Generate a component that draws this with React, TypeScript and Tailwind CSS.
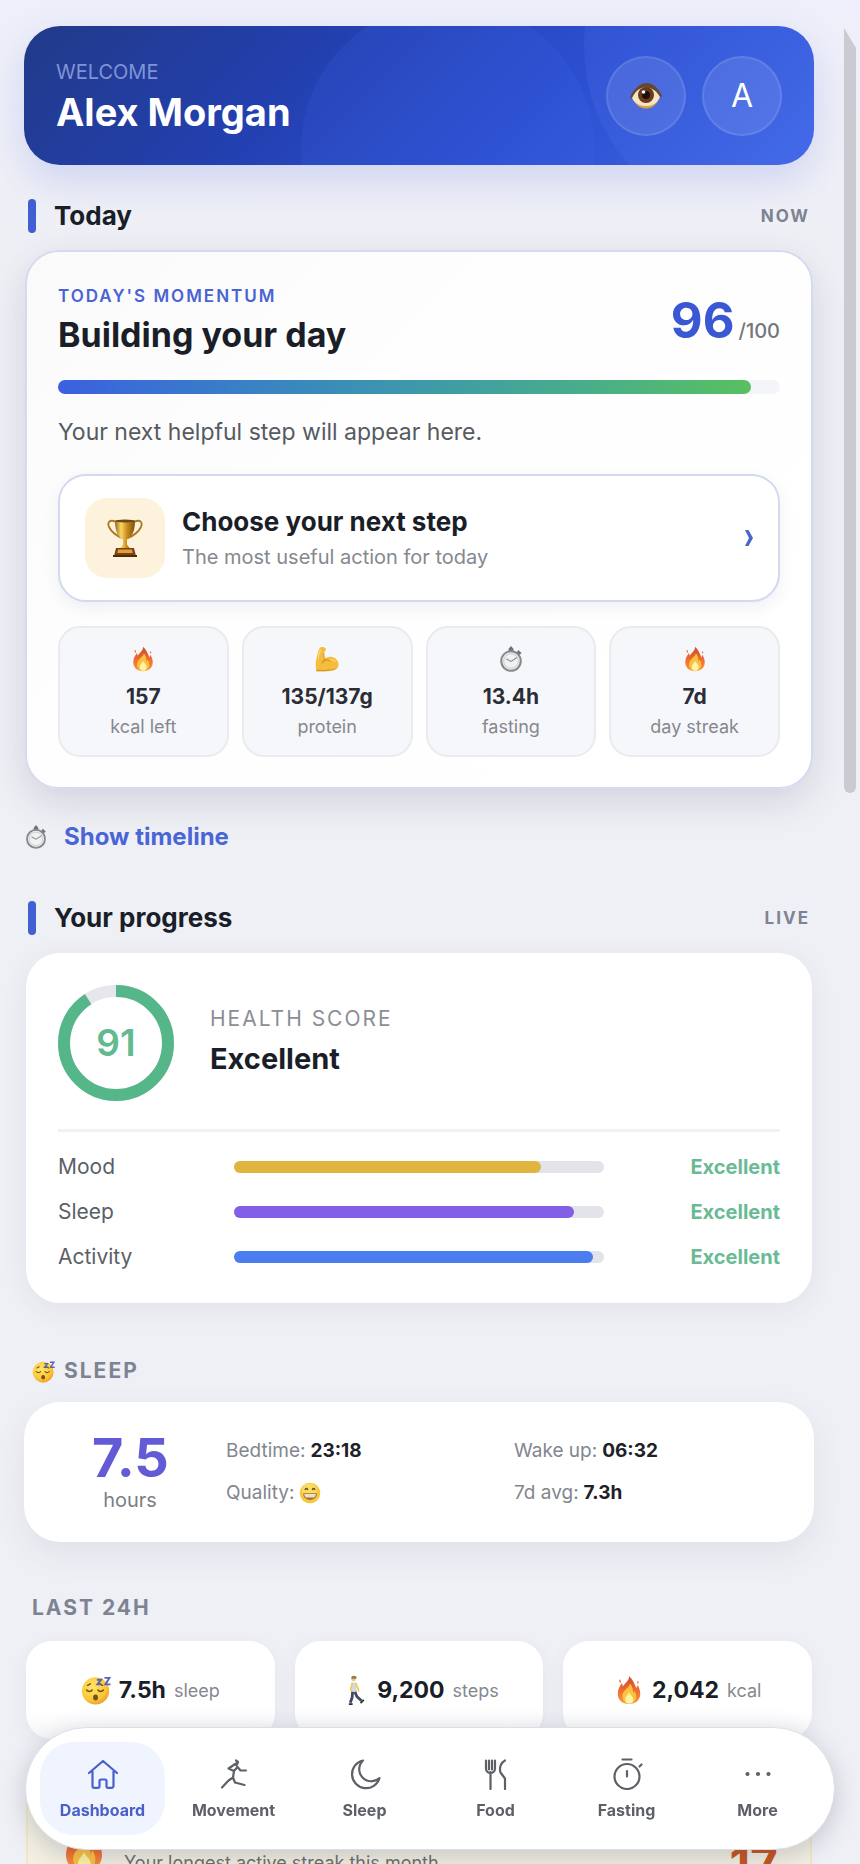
import {useId} from "react";
import type {ReactNode} from "react";

type EmojiProps = { className?: string }

const Fire = ({className}: EmojiProps) => {
    const id = useId()
    return (
        <svg viewBox="0 0 32 32" className={className} aria-hidden="true">
            <defs>
                <linearGradient id={id} x1="0" y1="0" x2="0" y2="1">
                    <stop offset="0" stopColor="#c9492b"/>
                    <stop offset="0.5" stopColor="#ef6a30"/>
                    <stop offset="1" stopColor="#f99a3c"/>
                </linearGradient>
            </defs>
            <path fill={`url(#${id})`} d="M16 1c1 4-4 7-6.500 11C9 11 9 10 8.500 8.500 6 12 4 15.500 4 20c0 6.500 5 11 12 11s12-4.500 12-11c0-4-1.500-6-2.500-9-1 1-1.300 2-1.500 3.500C22 9 19.500 4 16 1z"/>
            <path fill="#ef6a30" d="M6 4.500c1.500 1 1.800 2.500.8 4-1.200-1-1.500-2.500-.8-4zM25.500 6c1 1 1 2.200 0 3.500-1-1-1-2.300 0-3.500z"/>
            <path fill="#fcc13f" d="M17 9c0 4-6.500 6.500-8 11.500C8 26 11 30.500 16 30.500s8-4 7.500-9c-.3-2-1-3-1.500-4.500-1 .7-1.300 1.500-1.700 2.500C20.500 15.500 19.500 11.500 17 9z"/>
            <path fill="#fff3a6" d="M16 18c-1 3-4 4.500-4 8 0 3 2 4.500 4.300 4.500S20.500 29 20.500 26c0-3.500-3-4.500-4.500-8z"/>
        </svg>
    )
}

const Muscle = ({className}: EmojiProps) => (
    <svg viewBox="0 0 32 32" className={className} aria-hidden="true">
        <path fill="#f5bd3c" d="M8 1.500c3-1 6 0 6.500 2 .5 2.500-1 4-3.500 4.500L12 16c3-3 9-4 13-1.500 4 2.500 6 6.500 5 10.500-1 4-7 6-13 6H3c-1.500-6-1-14 1-20 .8-3 1.500-7 4-9.500z"/>
        <path fill="#d99527" d="M11 8l1 9c-2 2-3 4-3 6 1-1.500 3-3.500 5-4.500 3-1 5 0 6.500 2C20 17 17 15.500 13.500 16.500L12.500 8zM3 31c5 .5 20 .5 25-4-5 2-16 3-25 2z"/>
        <path fill="#fbd86f" d="M7.500 4C5 8 4.500 15 4.700 20 6 15 7 9 9 5zM19 16c3-1 7 1 8.500 4-3-1-5.500-2-8.500-4z"/>
    </svg>
)

const Stopwatch = ({className}: EmojiProps) => (
    <svg viewBox="0 0 32 32" className={className} aria-hidden="true">
        <path fill="#6f7277" d="M13 3.500L16 0l3 3.500v3h-6zM25 5l4 3.500-2.500 2.500-3.500-3z"/>
        <circle cx="16" cy="18.500" r="12" fill="#f0f1f2" stroke="#85888d" strokeWidth="2.500"/>
        <circle cx="16" cy="18.500" r="9" fill="none" stroke="#bfc1c4" strokeWidth="1"/>
        <path d="M10.500 16l5.500 3 7-4.500" fill="none" stroke="#8b8d91" strokeWidth="1.400" strokeLinecap="round"/>
    </svg>
)

const Sleeping = ({className}: EmojiProps) => {
    const id = useId()
    return (
        <svg viewBox="0 0 32 32" className={className} aria-hidden="true">
            <defs>
                <radialGradient id={id} cx="0.4" cy="0.35" r="0.7">
                    <stop offset="0" stopColor="#ffe566"/>
                    <stop offset="0.7" stopColor="#fbc638"/>
                    <stop offset="1" stopColor="#ec9a28"/>
                </radialGradient>
            </defs>
            <circle cx="15.500" cy="17" r="14.500" fill={`url(#${id})`}/>
            <path d="M6 16c1.500 2 4.500 2 6 0M18 16c1.500 2 4.500 2 6 0M7 11l3-1.500M20 9.500l3 1.500" fill="none" stroke="#74501c" strokeWidth="1.600" strokeLinecap="round"/>
            <ellipse cx="15.500" cy="24" rx="2.600" ry="3.200" fill="#74501c"/>
            <path d="M17 5h4.500L17.500 10H22M25 3h5.500l-4.500 7h5.500" fill="none" stroke="#5a63b0" strokeWidth="2"/>
        </svg>
    )
}

const Grin = ({className}: EmojiProps) => (
    <svg viewBox="0 0 32 32" className={className} aria-hidden="true">
        <circle cx="16" cy="16" r="15" fill="#f6c63f"/>
        <circle cx="15" cy="13" r="11" fill="#fbdc62"/>
        <path d="M9 11c1-2 2.500-2 3.500 0M19.500 11c1-2 2.500-2 3.500 0" fill="none" stroke="#6b4b1a" strokeWidth="2" strokeLinecap="round"/>
        <path d="M6 16.500h20c0 6-4.500 9.500-10 9.500S6 22.500 6 16.500z" fill="#a06f38"/>
        <path d="M7.500 17.500h17c-.3 3-1.500 4-3 5h-11c-1.500-1-2.700-2-3-5z" fill="#f0dfc0"/>
    </svg>
)

const Eye = ({className}: EmojiProps) => (
    <svg viewBox="0 0 32 28" className={className} aria-hidden="true">
        <path fill="#65482f" d="M0 15C5 5 11 1 17 1s11 5 15 13l-2 2C26 9 22 6 16 6S5 10 2 17z"/>
        <path fill="#f4e6c4" d="M2 16C6 8 10 5.500 16 5.500S26.500 9 30 15c-3 7-8 10.500-14 10.500S6 23 2 16z"/>
        <path fill="#d8a640" d="M4 19c3 5 7 7.500 12 7.500S25.500 24 28.500 18c-3 4-7 6-12.500 6S7 22.500 4 19z"/>
        <circle cx="16" cy="13" r="8" fill="#6b3a1d"/>
        <circle cx="16" cy="13" r="4" fill="#1d100b"/>
        <circle cx="13.500" cy="10" r="1.800" fill="#fff"/>
    </svg>
)

const Trophy = ({className}: EmojiProps) => {
    const id = useId()
    return (
        <svg viewBox="0 0 36 38" className={className} aria-hidden="true">
            <defs>
                <linearGradient id={id} x1="0" y1="0" x2="1" y2="0">
                    <stop offset="0" stopColor="#9b6614"/>
                    <stop offset="0.3" stopColor="#f8d865"/>
                    <stop offset="0.6" stopColor="#c98c1e"/>
                    <stop offset="1" stopColor="#7d500f"/>
                </linearGradient>
            </defs>
            <path d="M9 3C3 0 0 3 2 8c2 4 6 8 13 11M27 3c6-3 9 0 7 5-2 4-6 8-13 11" fill="none" stroke="#a9791f" strokeWidth="1.800"/>
            <path fill={`url(#${id})`} d="M8 1.500h20c0 9-2 16-8 19v5l3 4H13l3-4v-5C10 17.500 8 10.500 8 1.500z"/>
            <ellipse cx="18" cy="2" rx="10" ry="1.500" fill="#6e4810"/>
            <path fill="#7b4315" d="M9 29h18l2 8H7z"/>
            <path fill="#e2a03a" d="M11 30.500h14l.7 3.500H10.300z"/>
            <path fill="#4d2a10" d="M6 36h24v2H6z"/>
        </svg>
    )
}

const Walker = ({className}: EmojiProps) => (
    <svg viewBox="0 0 32 32" className={className} aria-hidden="true">
        <circle cx="15.500" cy="4" r="2.600" fill="#e6c562"/>
        <path d="M13 3c0-3 5.500-3 6 0l-1 1h-4z" fill="#8c7c58"/>
        <path d="M13.500 8h4.500l1 10h-6z" fill="#d5d8df"/>
        <path d="M14 9l-1.500 6 1.500 4M18 9l2 5 1 3" fill="none" stroke="#ecca62" strokeWidth="1.800" strokeLinecap="round"/>
        <path d="M14.500 18l-.5 6-2 5.500M17 18l2 5 5 4.500" fill="none" stroke="#3e4a63" strokeWidth="3" strokeLinejoin="round"/>
        <path d="M10.500 31h4M23 30l3.500-3.500" stroke="#2b2d33" strokeWidth="1.800"/>
    </svg>
)

const NavIcon = ({children}: { children: ReactNode }) => (
    <svg viewBox="0 0 32 32" className="size-8" fill="none" stroke="currentColor" strokeWidth="2.200"
         strokeLinecap="round" strokeLinejoin="round" aria-hidden="true">
        {children}
    </svg>
)

const navItems = [
    {
        name: 'Dashboard',
        icon: <path d="M2 15L16 3l14 12M5.500 13v15a1.800 1.800 0 001.800 1.800H11A1.500 1.500 0 0012.500 28v-5a1.500 1.500 0 011.500-1.500h4a1.500 1.500 0 011.500 1.500v5a1.500 1.500 0 001.500 1.800h3.700a1.800 1.800 0 001.800-1.800V13"/>
    },
    {
        name: 'Movement',
        icon: <path d="M18 2.500l2 1.500-1.500 3.500M10.500 10.500L18 5.500M10.500 10.500L16 13l3.500-4 3 3.500h5.500M16 13l-1 6.500M10.500 22.500l4.500-3 2 5 9.500 2.500M10.500 22.500L4 29.500"/>
    },
    {
        name: 'Sleep',
        icon: <path d="M14 2.500A14 14 0 1030.500 20 10.500 10.500 0 0114 2.500z"/>
    },
    {
        name: 'Food',
        icon: <path d="M6 2.500v8a4.500 4.500 0 009 0v-8M9 2.500v9M12 2.500v9M10.500 14v17M25 31V20.500l-4.500-6c-1.500-5 .5-10 4.500-12"/>
    },
    {
        name: 'Fasting',
        icon: <>
            <circle cx="16" cy="18.500" r="12.500"/>
            <path d="M11.500 1.500h9M28.500 8.500l2-2M16 13v5.500"/>
        </>
    },
    {
        name: 'More',
        icon: <>
            <circle cx="5.500" cy="16" r="1" fill="currentColor"/>
            <circle cx="16" cy="16" r="1" fill="currentColor"/>
            <circle cx="26.500" cy="16" r="1" fill="currentColor"/>
        </>
    },
]

const stats = [
    {icon: <Fire className="size-[26px]"/>, value: '157', label: 'kcal left'},
    {icon: <Muscle className="size-[26px]"/>, value: '135/137g', label: 'protein'},
    {icon: <Stopwatch className="size-[26px]"/>, value: '13.4h', label: 'fasting'},
    {icon: <Fire className="size-[26px]"/>, value: '7d', label: 'day streak'},
]

const scores = [
    {name: 'Mood', value: 83, color: 'bg-[#dfb43f]', rating: 'Excellent'},
    {name: 'Sleep', value: 92, color: 'bg-[#835fe8]', rating: 'Excellent'},
    {name: 'Activity', value: 97, color: 'bg-[#4a7df0]', rating: 'Excellent'},
]

const lastDay = [
    {icon: <Sleeping className="size-[30px]"/>, value: '7.5h', label: 'sleep'},
    {icon: <Walker className="size-[30px]"/>, value: '9,200', label: 'steps'},
    {icon: <Fire className="size-[30px]"/>, value: '2,042', label: 'kcal'},
]

const SectionTitle = ({title, note}: { title: string, note: string }) => (
    <div className="flex items-center px-1">
        <span className="w-2 h-[34px] rounded-full bg-[#405fd2]"/>
        <h2 className="ml-[18px] text-[26px] leading-[34px] font-bold text-[#1a1e28]">{title}</h2>
        <span className="ml-auto text-[17px] leading-6 font-bold tracking-[2px] text-[#7d8392]">{note}</span>
    </div>
)

const Fact = ({label, children}: { label: string, children: ReactNode }) => (
    <div className="flex items-center gap-[5px]">
        <dt>{label}:</dt>
        <dd className="font-bold text-[#1e2128]">{children}</dd>
    </div>
)

const App = () => {
    return (
        <div className="relative h-screen overflow-hidden bg-[#eff0f5] font-['Inter',sans-serif] text-[#1a1e28]">
            <main className="h-full overflow-y-auto [scrollbar-width:none] bg-linear-to-b from-[#eeeffa] to-[#eff0f5] to-15% pt-[26px] pb-10 pl-6 pr-[46px]">
                <header className="relative h-[139px] overflow-hidden rounded-[36px] bg-linear-[135deg,#213a88_0%,#2340b0_35%,#2b4fd0_65%,#3f66e6_100%] px-8 flex items-center justify-between shadow-[0_16px_40px_rgba(60,90,210,0.18)]">
                    <span className="absolute left-[277px] -top-6 size-[294px] rounded-full bg-[#5577ff]/12"/>
                    <span className="absolute -right-[130px] -top-40 size-[360px] rounded-full bg-[#6f8cff]/12"/>
                    <div className="relative pt-1">
                        <p className="text-[20px] leading-6 text-[#8193d6]">WELCOME</p>
                        <h1 className="mt-1 text-[38px] leading-[48px] font-bold text-white">Alex Morgan</h1>
                    </div>
                    <div className="relative flex gap-4">
                        <button aria-label="Toggle privacy" className="size-20 rounded-full border-2 border-white/10 bg-white/10 flex items-center justify-center">
                            <Eye className="h-7 w-8"/>
                        </button>
                        <button aria-label="Profile" className="size-20 rounded-full border-2 border-white/10 bg-white/10 text-[32px] text-white">A</button>
                    </div>
                </header>

                <section className="mt-[34px]">
                    <SectionTitle title="Today" note="NOW"/>
                    <div className="mt-[17px] mx-px rounded-[34px] border-2 border-[#d6d9f0] bg-linear-[135deg,#fafafa_0%,#fefefe_40%,#ffffff_100%] px-[31px] pt-8 pb-[30px] shadow-[0_12px_36px_rgba(50,60,100,0.16)]">
                        <div className="flex items-center justify-between">
                            <div>
                                <p className="text-[17px] leading-6 font-semibold tracking-[2px] text-[#4a63d2]">TODAY'S MOMENTUM</p>
                                <h3 className="mt-1 text-[34px] leading-[46px] font-bold">Building your day</h3>
                            </div>
                            <p className="flex items-baseline gap-1">
                                <strong className="text-[49px] leading-[60px] font-bold text-[#3b58d4]">96</strong>
                                <span className="text-[20px] font-medium text-[#73767d]">/100</span>
                            </p>
                        </div>
                        <div className="mt-[22px] h-3.5 rounded-full bg-[#f4f5f8]">
                            <div className="h-full w-[96%] rounded-full bg-linear-to-r from-[#3c5fe0] to-[#58c05f]"/>
                        </div>
                        <p className="mt-5 text-[23px] leading-9 text-[#565a61]">Your next helpful step will appear here.</p>

                        <button className="mt-6 w-full rounded-[28px] border-2 border-[#d3d9ef] bg-white px-[25px] py-[22px] flex items-center text-left shadow-[0_6px_16px_rgba(60,80,140,0.08)]">
                            <span className="size-20 shrink-0 rounded-[22px] bg-[#fdf2db] flex items-center justify-center">
                                <Trophy className="h-[38px] w-9"/>
                            </span>
                            <span className="ml-[17px] flex flex-col">
                                <span className="text-[26px] leading-[34px] font-bold">Choose your next step</span>
                                <span className="mt-1 text-[20px] leading-7 text-[#85888f]">The most useful action for today</span>
                            </span>
                            <svg viewBox="0 0 8 16" className="ml-auto h-4 w-2" aria-hidden="true">
                                <path d="M0 0h3.500L8 8l-4.500 8H0l4-8z" fill="#4a66c8"/>
                            </svg>
                        </button>

                        <ul className="mt-6 grid grid-cols-4 gap-[13px]">
                            {stats.map(s => (
                                <li key={s.label} className="h-[131px] rounded-[22px] border-2 border-[#eaebef] bg-[#f6f7fa] pt-[18px] flex flex-col items-center">
                                    {s.icon}
                                    <strong className="mt-[11px] text-[21px] leading-7 font-bold text-[#2a2d35]">{s.value}</strong>
                                    <span className="mt-1 text-[18px] leading-6 text-[#85888f]">{s.label}</span>
                                </li>
                            ))}
                        </ul>
                    </div>
                </section>

                <button className="mt-[30px] flex items-center text-[24px] leading-9 font-bold text-[#4a66d6]">
                    <Stopwatch className="size-6 mr-4"/>
                    Show timeline
                </button>

                <section className="mt-[46px]">
                    <SectionTitle title="Your progress" note="LIVE"/>
                    <div className="mt-[18px] mx-0.5 rounded-[34px] bg-white px-8 pt-8 pb-6 shadow-[0_6px_28px_rgba(50,60,100,0.07)]">
                        <div className="flex items-center gap-9 pb-7 border-b-[3px] border-[#f1f1f3]">
                            <div className="relative size-[116px]">
                                <svg viewBox="0 0 116 116" className="size-full -rotate-90" aria-hidden="true">
                                    <circle cx="58" cy="58" r="52" fill="none" stroke="#e6e7ea" strokeWidth="12"/>
                                    <circle cx="58" cy="58" r="52" fill="none" stroke="#55b689" strokeWidth="12" pathLength="100" strokeDasharray="91 100"/>
                                </svg>
                                <span className="absolute inset-0 flex items-center justify-center text-[37px] font-semibold text-[#62ba91]">91</span>
                            </div>
                            <div>
                                <p className="text-[21px] leading-6 tracking-[2px] text-[#8b8e96]">HEALTH SCORE</p>
                                <h3 className="mt-2 text-[29px] leading-10 font-bold">Excellent</h3>
                            </div>
                        </div>
                        <ul className="mt-3">
                            {scores.map(s => (
                                <li key={s.name} className="h-[45px] grid grid-cols-[176px_1fr_176px] items-center text-[21px] text-[#5c5f66]">
                                    <span>{s.name}</span>
                                    <div className="h-3 rounded-full bg-[#e3e3ea]">
                                        <div className={`h-full rounded-full ${s.color}`} style={{width: `${s.value}%`}}/>
                                    </div>
                                    <span className="text-right text-[20px] font-bold text-[#68bb94]">{s.rating}</span>
                                </li>
                            ))}
                        </ul>
                    </div>
                </section>

                <section className="mt-[52px]">
                    <h2 className="flex items-center gap-[9px] pl-2 text-[21px] leading-8 font-bold tracking-[2px] text-[#7d8392]">
                        <Sleeping className="size-[23px]"/>SLEEP
                    </h2>
                    <div className="mt-[15px] h-[140px] rounded-[36px] bg-white flex items-center pl-[68px] pr-3 shadow-[0_12px_32px_rgba(50,60,100,0.08)]">
                        <div className="w-[76px] text-center">
                            <strong className="block text-[54px] leading-[56px] font-bold text-[#635bd6]">7.5</strong>
                            <span className="block text-[20px] leading-7 text-[#7b7e86]">hours</span>
                        </div>
                        <dl className="ml-[58px] grow grid grid-cols-2 gap-y-3.5 text-[19px] leading-7 text-[#83868e]">
                            <Fact label="Bedtime">23:18</Fact>
                            <Fact label="Wake up">06:32</Fact>
                            <Fact label="Quality"><Grin className="size-[22px]"/></Fact>
                            <Fact label="7d avg">7.3h</Fact>
                        </dl>
                    </div>
                </section>

                <section className="mt-[50px]">
                    <h2 className="pl-2 text-[21px] leading-8 font-bold tracking-[2px] text-[#7d8392]">LAST 24H</h2>
                    <ul className="mt-[17px] mx-0.5 grid grid-cols-3 gap-5">
                        {lastDay.map(d => (
                            <li key={d.label} className="h-[98px] rounded-[26px] bg-linear-to-b from-white from-70% to-[#f6f7f9] flex items-center justify-center shadow-[0_6px_20px_rgba(50,60,100,0.06)]">
                                {d.icon}
                                <strong className="ml-2 text-[23px] font-bold">{d.value}</strong>
                                <span className="ml-2 text-[18px] text-[#85888f]">{d.label}</span>
                            </li>
                        ))}
                    </ul>
                </section>

                <section className="mt-10 mx-0.5 h-[140px] rounded-[26px] border-2 border-[#f1e8c2] bg-[#f3efe2] px-8 flex items-center">
                    <Fire className="size-12"/>
                    <p className="ml-4 pt-7 text-[18px] leading-7 text-[#71706c]">Your longest active streak this month</p>
                    <strong className="ml-auto pt-8 text-[48px] leading-[56px] font-bold text-[#c9551f]">17</strong>
                </section>
            </main>

            <div className="absolute right-1 top-7 h-[765px] w-3 rounded-b-full bg-[#c9cad2] [clip-path:polygon(0_0,100%_20px,100%_100%,0_100%)]"/>

            <nav className="fixed inset-x-[25px] bottom-3.5 h-[123px] rounded-full border border-[#dcdee4] bg-white p-3.5 grid grid-cols-6 gap-1.5 shadow-[0_6px_24px_rgba(40,50,80,0.22)]">
                {navItems.map((item, i) => (
                    <a key={item.name} href={'#' + item.name.toLowerCase()}
                       className={i === 0
                           ? 'rounded-[34px] bg-[#eff4ff] pt-0.5 text-[#4a60c8] flex flex-col items-center justify-center'
                           : 'rounded-[34px] pt-0.5 text-[#5d6067] flex flex-col items-center justify-center'}>
                        <NavIcon>{item.icon}</NavIcon>
                        <span className="mt-2 text-[16px] leading-6 font-bold">{item.name}</span>
                    </a>
                ))}
            </nav>
        </div>
    );
};

export default App;
